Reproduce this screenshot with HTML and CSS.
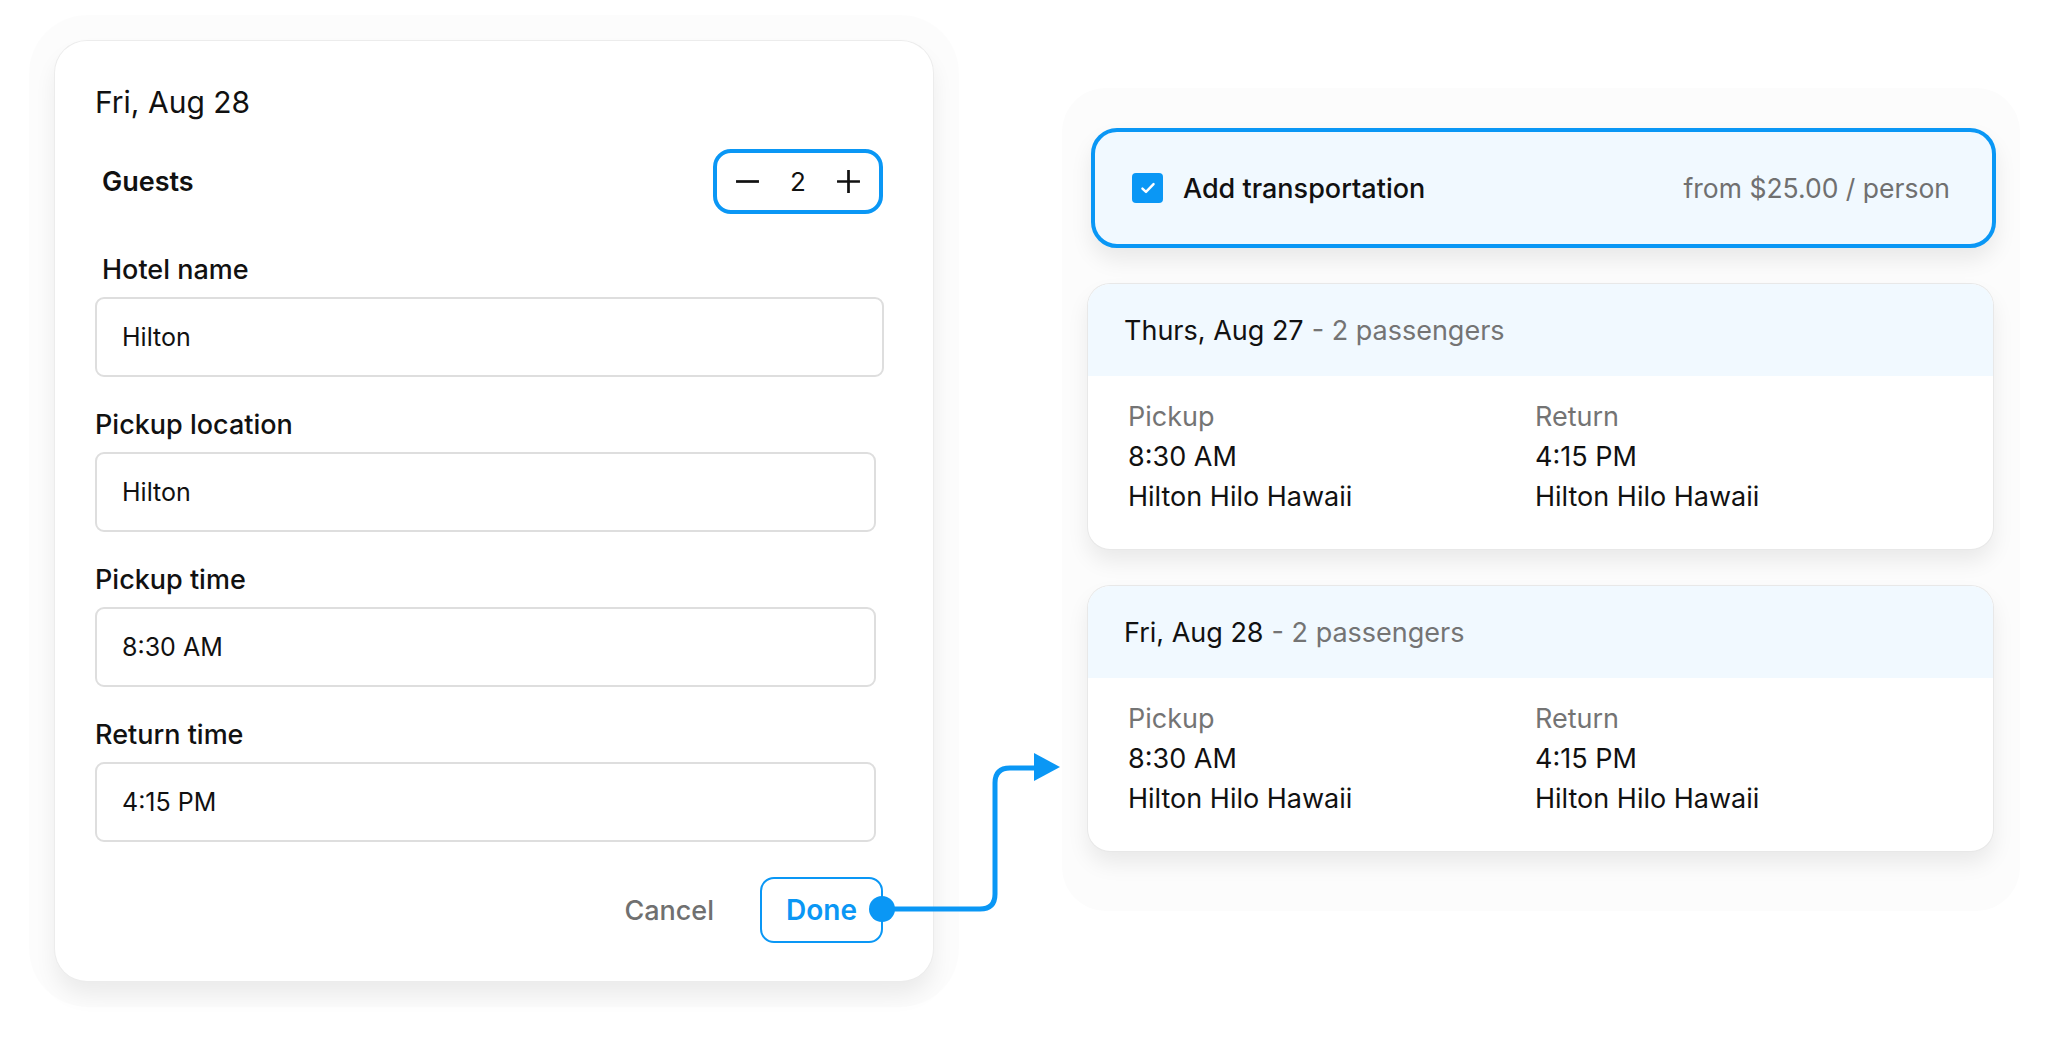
FILE: index.html
```html
<!DOCTYPE html>
<html>

<head>
    <meta charset="utf-8">
    <title>Transportation</title>
    <meta name="viewport" content="width=device-width,initial-scale=1">
    <link rel="stylesheet" href="styles.css">
</head>

<body>
    <div class="stage">
        <section class="editor">
            <h2 class="editor-title">Fri, Aug 28</h2>
            <div class="guests">
                <div class="guests-label">Guests</div>
                <div class="stepper">
                    <svg width="25" height="25" viewBox="0 0 24 24"><path d="M1 12h22" stroke="#111" stroke-width="2.6"/></svg>
                    <span class="stepper-value">2</span>
                    <svg width="25" height="25" viewBox="0 0 24 24"><path d="M1 12h22M12 1v22" stroke="#111" stroke-width="2.6"/></svg>
                </div>
            </div>
            <div class="field field-hotel">
                <div class="field-label">Hotel name</div>
                <div class="field-input">Hilton</div>
            </div>
            <div class="field">
                <div class="field-label">Pickup location</div>
                <div class="field-input">Hilton</div>
            </div>
            <div class="field">
                <div class="field-label">Pickup time</div>
                <div class="field-input">8:30 AM</div>
            </div>
            <div class="field">
                <div class="field-label">Return time</div>
                <div class="field-input">4:15 PM</div>
            </div>
            <div class="actions">
                <button class="btn-cancel">Cancel</button>
                <button class="btn-done">Done</button>
            </div>
        </section>

        <section class="summary">
            <div class="transport">
                <div class="transport-left">
                    <span class="checkbox">
                        <svg width="20" height="20" viewBox="0 0 18 18"><path d="M4 9.5l3.2 3L14 5.5" fill="none" stroke="#fff" stroke-width="2.2" stroke-linecap="round" stroke-linejoin="round"/></svg>
                    </span>
                    <span class="transport-title">Add transportation</span>
                </div>
                <span class="transport-price">from $25.00 / person</span>
            </div>

            <div class="trip">
                <div class="trip-head">Thurs, Aug 27 <span class="muted">- 2 passengers</span></div>
                <div class="trip-body">
                    <div class="trip-col">
                        <div class="muted">Pickup</div>
                        <div>8:30 AM</div>
                        <div>Hilton Hilo Hawaii</div>
                    </div>
                    <div class="trip-col">
                        <div class="muted">Return</div>
                        <div>4:15 PM</div>
                        <div>Hilton Hilo Hawaii</div>
                    </div>
                </div>
            </div>

            <div class="trip">
                <div class="trip-head">Fri, Aug 28 <span class="muted">- 2 passengers</span></div>
                <div class="trip-body">
                    <div class="trip-col">
                        <div class="muted">Pickup</div>
                        <div>8:30 AM</div>
                        <div>Hilton Hilo Hawaii</div>
                    </div>
                    <div class="trip-col">
                        <div class="muted">Return</div>
                        <div>4:15 PM</div>
                        <div>Hilton Hilo Hawaii</div>
                    </div>
                </div>
            </div>
        </section>

        <!-- arrow from Done to the new card -->
        <svg class="connector" width="2048" height="1050" viewBox="0 0 2048 1050">
            <path d="M882 909H980Q995 909 995 894V783Q995 768 1010 768H1038" fill="none" stroke="#0a97f5" stroke-width="5"/>
            <polygon points="1034,753 1060,767 1034,781" fill="#0a97f5"/>
            <circle cx="882" cy="909" r="13" fill="#0a97f5"/>
        </svg>
    </div>
</body>

</html>
```

FILE: styles.css
```css
* {
    box-sizing: border-box;
}

body {
    margin: 0;
    background: #fff;
    font-family: Inter, "Noto Sans", sans-serif;
    color: #111;
}

.stage {
    position: relative;
    width: 2048px;
    height: 1050px;
    display: flex;
    align-items: flex-start;
    padding: 41px 0 0 55px;
}

/* left form card */
.editor {
    width: 878px;
    height: 940px;
    background: #fff;
    border-radius: 32px;
    padding: 43px 50px 0 40px;
    box-shadow: 0 0 0 1px #ececec, 0 14px 22px rgba(0, 0, 0, .07), 0 0 0 26px rgba(0, 0, 0, .013);
}

.editor-title {
    margin: 0;
    font-size: 30px;
    font-weight: 400;
    line-height: 36px;
}

.guests {
    display: flex;
    justify-content: space-between;
    align-items: center;
    margin-top: 29px;
    padding-left: 7px;
}

.guests-label {
    font-size: 27px;
    font-weight: 600;
}

.stepper {
    display: flex;
    align-items: center;
    justify-content: space-between;
    width: 170px;
    height: 65px;
    padding: 0 18px;
    border: 4px solid #0a97f5;
    border-radius: 18px;
}

.stepper-value {
    font-size: 26px;
}

.field {
    margin-top: 33px;
}

.field-hotel {
    margin-top: 41px;
}

.field-label {
    font-size: 27px;
    font-weight: 500;
    line-height: 30px;
    margin-bottom: 12px;
}

.field-hotel .field-label {
    padding-left: 7px;
}

.field-input {
    width: 781px;
    height: 80px;
    display: flex;
    align-items: center;
    padding-left: 25px;
    border: 2px solid #dedede;
    border-radius: 9px;
    font-size: 25px;
}

.field-hotel .field-input {
    width: 789px;
}

.actions {
    display: flex;
    justify-content: flex-end;
    align-items: center;
    gap: 40px;
    margin-top: 35px;
}

.actions button {
    font-family: inherit;
    background: none;
    cursor: pointer;
}

.btn-cancel {
    border: 0;
    color: #707070;
    font-size: 27px;
    font-weight: 500;
}

.btn-done {
    width: 123px;
    height: 66px;
    border: 2px solid #0a97f5;
    border-radius: 14px;
    color: #0a97f5;
    font-size: 28px;
    font-weight: 600;
}

/* right summary */
.summary {
    margin: 47px 0 0 129px;
    width: 958px;
    padding: 40px 27px 60px 26px;
    border-radius: 44px;
    background: #fcfcfc;
    display: flex;
    flex-direction: column;
    gap: 37px;
}

.transport {
    height: 120px;
    margin: 0 -3px -1px 3px;
    display: flex;
    align-items: center;
    justify-content: space-between;
    padding: 0 42px 0 37px;
    background: #f1f9ff;
    border: 4px solid #0a97f5;
    border-radius: 26px;
    box-shadow: 0 12px 22px rgba(0, 0, 0, .08);
}

.transport-left {
    display: flex;
    align-items: center;
    gap: 20px;
}

.checkbox {
    width: 31px;
    height: 30px;
    border-radius: 4px;
    background: #0a97f5;
    display: flex;
    align-items: center;
    justify-content: center;
}

.transport-title {
    font-size: 27px;
    font-weight: 500;
}

.transport-price {
    font-size: 26.5px;
    color: #707070;
}

.muted {
    color: #747474;
}

.trip {
    background: #fff;
    border-radius: 22px;
    overflow: hidden;
    font-size: 27px;
    box-shadow: 0 0 0 1px #e8e8e8, 0 12px 22px rgba(0, 0, 0, .08);
}

.trip-head {
    height: 92px;
    display: flex;
    align-items: center;
    gap: 8px;
    padding-left: 36px;
    background: #f1f9ff;
}

.trip-body {
    display: grid;
    grid-template-columns: 407px 1fr;
    padding: 21px 40px 32px;
    line-height: 40px;
}

.connector {
    position: absolute;
    left: 0;
    top: 0;
    pointer-events: none;
}
```
